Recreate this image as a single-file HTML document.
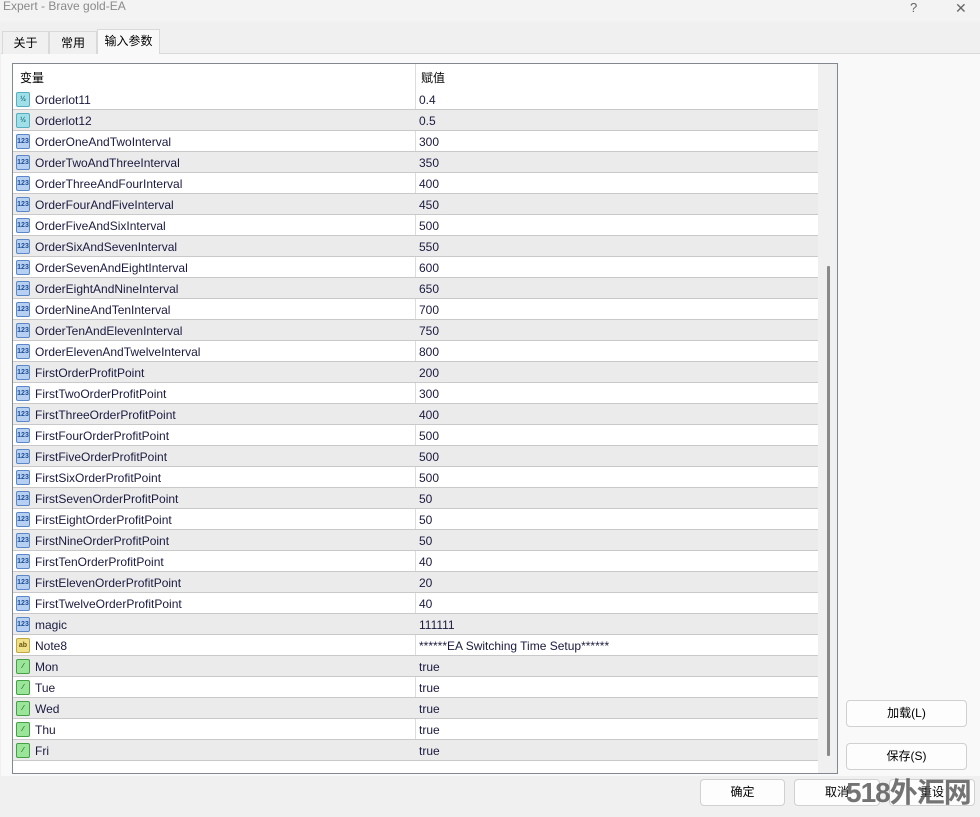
<!DOCTYPE html>
<html><head><meta charset="utf-8"><style>
*{margin:0;padding:0;box-sizing:border-box}
body{width:980px;height:817px;background:#f0f0f0;font-family:"Liberation Sans","Noto Sans CJK SC",sans-serif;font-size:12px;color:#000;position:relative;overflow:hidden}
.title{position:absolute;left:0;top:0;width:980px;height:22px;background:#f3f3f3;color:#8a8a8a;font-size:12px;padding:0 0 0 3px;line-height:13px}
.tb{position:absolute;top:0;color:#666;font-size:13px}
.tab{position:absolute;top:31px;height:23px;border:1px solid #d9d9d9;border-bottom:none;background:#f0f0f0;line-height:22px;text-align:center;font-size:12px}
.tab.sel{top:29px;height:25px;background:#f9f9f9}
.page{position:absolute;left:1px;top:53px;width:979px;height:723px;background:#f9f9f9;border-top:1px solid #d9d9d9}
.list{position:absolute;left:12px;top:63px;width:826px;height:711px;border:1px solid #828790;background:#fff;overflow:hidden}
.hdr{position:absolute;left:0;top:0;width:805px;height:25px;background:#fff}
.hdr span{position:absolute;top:5px}
.row{position:absolute;left:0;width:805px;height:21px;border-bottom:1px solid #c9c9c9}
.row.g{background:#ebebeb}
.row .n{position:absolute;left:22px;top:4px;color:#1a1a40}
.row .v{position:absolute;left:406px;top:4px;color:#1a1a40}
.col{position:absolute;left:402px;top:0;width:1px;height:697px;background:#dcdcdc}
.ic{position:absolute;left:3px;top:3px;width:14px;height:15px;border-radius:2px;font-size:7px;line-height:13px;text-align:center;font-weight:bold}
.i1{background:#9fdfe8;border:1px solid #56aebf;color:#24707e}
.i2{background:#b7cff0;border:1px solid #5a87c8;color:#1e4f95}
.i3{background:#efe08a;border:1px solid #c0a640;color:#6a5510}
.i4{background:#9ae59a;border:1px solid #43a043;color:#1e6a1e}
.sb{position:absolute;left:805px;top:0;width:19px;height:709px;background:#f0f0f0}
.thumb{position:absolute;left:9px;top:202px;width:3px;height:490px;background:#8a8a8a;border-radius:1px}
.btn{position:absolute;height:27px;border:1px solid #d0d0d0;border-radius:4px;background:#fdfdfd;text-align:center;line-height:25px;font-size:12px}
.wm{position:absolute;left:846px;top:775px;font-size:28px;line-height:36px;font-weight:bold;color:rgba(90,90,90,.85);letter-spacing:-1px;white-space:nowrap}
</style></head><body>
<div class="title">Expert - Brave gold-EA</div>
<div class="tb" style="left:910px">?</div>
<div class="tb" style="left:955px;font-size:14px">✕</div>
<div class="page"></div>
<div class="tab" style="left:2px;width:47px">关于</div>
<div class="tab" style="left:49px;width:48px">常用</div>
<div class="tab sel" style="left:97px;width:63px">输入参数</div>
<div class="list">
<div class="hdr"><span style="left:7px">变量</span><span style="left:408px">赋值</span></div>
<div class="col"></div>
<div class="row" style="top:25px"><span class="ic i1">½</span><span class="n">Orderlot11</span><span class="v">0.4</span></div>
<div class="row g" style="top:46px"><span class="ic i1">½</span><span class="n">Orderlot12</span><span class="v">0.5</span></div>
<div class="row" style="top:67px"><span class="ic i2">123</span><span class="n">OrderOneAndTwoInterval</span><span class="v">300</span></div>
<div class="row g" style="top:88px"><span class="ic i2">123</span><span class="n">OrderTwoAndThreeInterval</span><span class="v">350</span></div>
<div class="row" style="top:109px"><span class="ic i2">123</span><span class="n">OrderThreeAndFourInterval</span><span class="v">400</span></div>
<div class="row g" style="top:130px"><span class="ic i2">123</span><span class="n">OrderFourAndFiveInterval</span><span class="v">450</span></div>
<div class="row" style="top:151px"><span class="ic i2">123</span><span class="n">OrderFiveAndSixInterval</span><span class="v">500</span></div>
<div class="row g" style="top:172px"><span class="ic i2">123</span><span class="n">OrderSixAndSevenInterval</span><span class="v">550</span></div>
<div class="row" style="top:193px"><span class="ic i2">123</span><span class="n">OrderSevenAndEightInterval</span><span class="v">600</span></div>
<div class="row g" style="top:214px"><span class="ic i2">123</span><span class="n">OrderEightAndNineInterval</span><span class="v">650</span></div>
<div class="row" style="top:235px"><span class="ic i2">123</span><span class="n">OrderNineAndTenInterval</span><span class="v">700</span></div>
<div class="row g" style="top:256px"><span class="ic i2">123</span><span class="n">OrderTenAndElevenInterval</span><span class="v">750</span></div>
<div class="row" style="top:277px"><span class="ic i2">123</span><span class="n">OrderElevenAndTwelveInterval</span><span class="v">800</span></div>
<div class="row g" style="top:298px"><span class="ic i2">123</span><span class="n">FirstOrderProfitPoint</span><span class="v">200</span></div>
<div class="row" style="top:319px"><span class="ic i2">123</span><span class="n">FirstTwoOrderProfitPoint</span><span class="v">300</span></div>
<div class="row g" style="top:340px"><span class="ic i2">123</span><span class="n">FirstThreeOrderProfitPoint</span><span class="v">400</span></div>
<div class="row" style="top:361px"><span class="ic i2">123</span><span class="n">FirstFourOrderProfitPoint</span><span class="v">500</span></div>
<div class="row g" style="top:382px"><span class="ic i2">123</span><span class="n">FirstFiveOrderProfitPoint</span><span class="v">500</span></div>
<div class="row" style="top:403px"><span class="ic i2">123</span><span class="n">FirstSixOrderProfitPoint</span><span class="v">500</span></div>
<div class="row g" style="top:424px"><span class="ic i2">123</span><span class="n">FirstSevenOrderProfitPoint</span><span class="v">50</span></div>
<div class="row" style="top:445px"><span class="ic i2">123</span><span class="n">FirstEightOrderProfitPoint</span><span class="v">50</span></div>
<div class="row g" style="top:466px"><span class="ic i2">123</span><span class="n">FirstNineOrderProfitPoint</span><span class="v">50</span></div>
<div class="row" style="top:487px"><span class="ic i2">123</span><span class="n">FirstTenOrderProfitPoint</span><span class="v">40</span></div>
<div class="row g" style="top:508px"><span class="ic i2">123</span><span class="n">FirstElevenOrderProfitPoint</span><span class="v">20</span></div>
<div class="row" style="top:529px"><span class="ic i2">123</span><span class="n">FirstTwelveOrderProfitPoint</span><span class="v">40</span></div>
<div class="row g" style="top:550px"><span class="ic i2">123</span><span class="n">magic</span><span class="v">111111</span></div>
<div class="row" style="top:571px"><span class="ic i3">ab</span><span class="n">Note8</span><span class="v">******EA Switching Time Setup******</span></div>
<div class="row g" style="top:592px"><span class="ic i4">⁄</span><span class="n">Mon</span><span class="v">true</span></div>
<div class="row" style="top:613px"><span class="ic i4">⁄</span><span class="n">Tue</span><span class="v">true</span></div>
<div class="row g" style="top:634px"><span class="ic i4">⁄</span><span class="n">Wed</span><span class="v">true</span></div>
<div class="row" style="top:655px"><span class="ic i4">⁄</span><span class="n">Thu</span><span class="v">true</span></div>
<div class="row g" style="top:676px"><span class="ic i4">⁄</span><span class="n">Fri</span><span class="v">true</span></div>
<div class="sb"><div class="thumb"></div></div>
</div>
<div class="btn" style="left:846px;top:700px;width:121px">加载(L)</div>
<div class="btn" style="left:846px;top:743px;width:121px">保存(S)</div>
<div class="btn" style="left:700px;top:779px;width:85px">确定</div>
<div class="btn" style="left:794px;top:779px;width:86px">取消</div>
<div class="btn" style="left:889px;top:779px;width:86px">重设</div>
<div class="wm">518外汇网</div>
</body></html>
